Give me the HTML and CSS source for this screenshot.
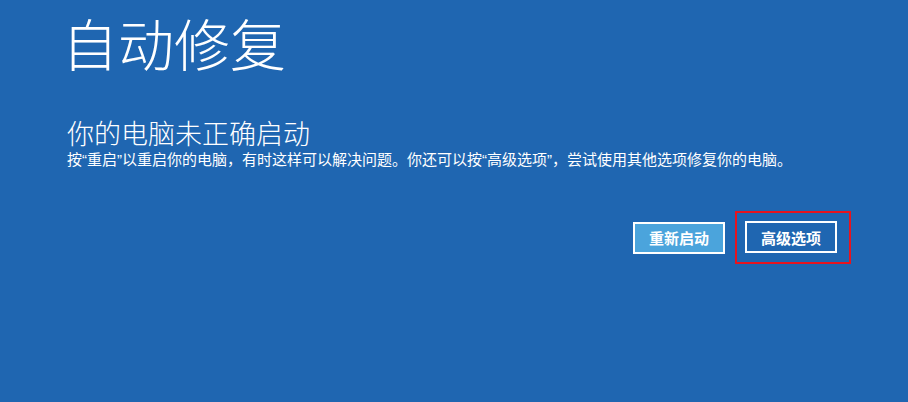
FILE: index.html
```html
<!DOCTYPE html>
<html lang="zh-CN">
<head>
<meta charset="utf-8">
<title>自动修复</title>
<link rel="stylesheet" href="styles.css">
</head>
<body>
<main class="screen">
  <h1 class="title">自动修复</h1>
  <h2 class="subtitle">你的电脑未正确启动</h2>
  <p class="desc">按“重启”以重启你的电脑，有时这样可以解决问题。你还可以按“高级选项”，尝试使用其他选项修复你的电脑。</p>
  <div class="actions">
    <button class="btn btn-primary">重新启动</button>
    <div class="highlight">
      <button class="btn">高级选项</button>
    </div>
  </div>
</main>
</body>
</html>
```

FILE: styles.css
```css
html, body {
  margin: 0;
  padding: 0;
  background: #1f66b1;
}
.screen {
  width: 908px;
  height: 402px;
  box-sizing: border-box;
  padding: 6px 0 0 66px;
  color: #ffffff;
  font-family: "Noto Sans CJK SC", "Noto Sans", sans-serif;
  background: #1f66b1;
}
.title {
  margin: 0 0 0 -4px;
  font-size: 56px;
  font-weight: 300;
  line-height: 72px;
  letter-spacing: 0;
}
.subtitle {
  margin: 39px 0 0 1px;
  font-size: 27px;
  font-weight: 300;
  line-height: 32px;
}
.desc {
  margin: 0 0 0 1px;
  font-family: "Liberation Sans", "Noto Sans CJK SC", sans-serif;
  font-size: 15px;
  line-height: 22px;
  font-weight: 400;
}
.actions {
  display: flex;
  align-items: center;
  margin: 40px 0 0 0;
  padding-right: 57px;
  justify-content: flex-end;
  gap: 10px;
}
.btn {
  width: 92px;
  height: 32px;
  box-sizing: border-box;
  border: 2px solid #ffffff;
  background: #1f66b1;
  color: #ffffff;
  font-family: "Noto Sans CJK SC", sans-serif;
  font-size: 15px;
  font-weight: 700;
  padding: 0;
  display: flex;
  align-items: center;
  justify-content: center;
}
.btn-primary {
  background: #4ba4dc;
}
.highlight {
  border: 2px solid #e8141e;
  padding: 8px 12px 9px 8px;
}
```
